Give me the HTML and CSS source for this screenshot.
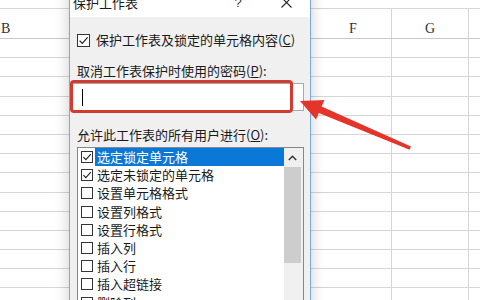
FILE: index.html
```html
<!DOCTYPE html>
<html lang="zh-CN">
<head>
<meta charset="utf-8">
<title>保护工作表</title>
<link rel="stylesheet" href="styles.css">
</head>
<body>
<div class="sheet">
  <div class="topline"></div>
  <div class="grid head"><div class="c c1"><span class="hb">B</span></div><div class="c c2">F</div><div class="c c3">G</div><div class="c c4"></div></div>
  <div class="grid row"><div class="c c1"></div><div class="c c2"></div><div class="c c3"></div><div class="c c4"></div></div>
  <div class="grid row"><div class="c c1"></div><div class="c c2"></div><div class="c c3"></div><div class="c c4"></div></div>
  <div class="grid row"><div class="c c1"></div><div class="c c2"></div><div class="c c3"></div><div class="c c4"></div></div>
  <div class="grid row"><div class="c c1"></div><div class="c c2"></div><div class="c c3"></div><div class="c c4"></div></div>
  <div class="grid row"><div class="c c1"></div><div class="c c2"></div><div class="c c3"></div><div class="c c4"></div></div>
  <div class="grid row"><div class="c c1"></div><div class="c c2"></div><div class="c c3"></div><div class="c c4"></div></div>
  <div class="grid row"><div class="c c1"></div><div class="c c2"></div><div class="c c3"></div><div class="c c4"></div></div>
  <div class="grid row"><div class="c c1"></div><div class="c c2"></div><div class="c c3"></div><div class="c c4"></div></div>
  <div class="grid row"><div class="c c1"></div><div class="c c2"></div><div class="c c3"></div><div class="c c4"></div></div>
  <div class="grid row"><div class="c c1"></div><div class="c c2"></div><div class="c c3"></div><div class="c c4"></div></div>
  <div class="grid row"><div class="c c1"></div><div class="c c2"></div><div class="c c3"></div><div class="c c4"></div></div>
  <div class="grid row"><div class="c c1"></div><div class="c c2"></div><div class="c c3"></div><div class="c c4"></div></div>
  <div class="grid row"><div class="c c1"></div><div class="c c2"></div><div class="c c3"></div><div class="c c4"></div></div>
  <div class="grid row"><div class="c c1"></div><div class="c c2"></div><div class="c c3"></div><div class="c c4"></div></div>
</div>

<div class="dialog">
  <div class="titlebar">
    <span class="title">保护工作表</span>
    <span class="tb-btn help">?</span>
    <span class="tb-btn close"><svg width="11" height="11" viewBox="0 0 11 11"><path d="M0.5 0.5 L10.5 10.5 M10.5 0.5 L0.5 10.5" stroke="#222" stroke-width="1.1" fill="none"/></svg></span>
  </div>
  <div class="body">
    <div class="chk-row">
      <span class="cb"><svg width="11" height="11" viewBox="0 0 11 11"><path d="M1.6 5.6 L4.3 8.4 L9.6 2.4" stroke="#222" stroke-width="1.2" fill="none"/></svg></span>
      <span>保护工作表及锁定的单元格内容(<u>C</u>)</span>
    </div>
    <div class="lbl lbl1">取消工作表保护时使用的密码(<u>P</u>):</div>
    <div class="pwd"><span class="caret"></span></div>
    <div class="lbl lbl2">允许此工作表的所有用户进行(<u>O</u>):</div>
    <div class="list">
      <div class="items">
        <div class="item sel"><span class="cb small"><svg width="10" height="10" viewBox="0 0 10 10"><path d="M1.4 5.1 L3.9 7.7 L8.8 2.2" stroke="#222" stroke-width="1.1" fill="none"/></svg></span><span class="txt">选定锁定单元格</span></div>
        <div class="item"><span class="cb small"><svg width="10" height="10" viewBox="0 0 10 10"><path d="M1.4 5.1 L3.9 7.7 L8.8 2.2" stroke="#222" stroke-width="1.1" fill="none"/></svg></span><span class="txt">选定未锁定的单元格</span></div>
        <div class="item"><span class="cb small"></span><span class="txt">设置单元格格式</span></div>
        <div class="item"><span class="cb small"></span><span class="txt">设置列格式</span></div>
        <div class="item"><span class="cb small"></span><span class="txt">设置行格式</span></div>
        <div class="item"><span class="cb small"></span><span class="txt">插入列</span></div>
        <div class="item"><span class="cb small"></span><span class="txt">插入行</span></div>
        <div class="item"><span class="cb small"></span><span class="txt">插入超链接</span></div>
        <div class="item"><span class="cb small"></span><span class="txt">删除列</span></div>
      </div>
      <div class="scroll">
        <div class="sb-up"><svg width="9" height="6" viewBox="0 0 9 6"><path d="M0.8 5 L4.5 1.2 L8.2 5" stroke="#333" stroke-width="1.4" fill="none"/></svg></div>
        <div class="thumb"></div>
      </div>
    </div>
  </div>
  <div class="redbox"></div>
</div>

<svg class="arrow" width="480" height="300" viewBox="0 0 480 300">
  <polygon points="300,101 324.5,100 321.6,106.6 411,146.6 409.6,149.8 318.8,113 316,119.6" fill="#e5352b"/>
</svg>
</body>
</html>
```

FILE: styles.css
```css
* { box-sizing: border-box; }
html, body { margin: 0; padding: 0; }
body {
  width: 480px;
  height: 300px;
  overflow: hidden;
  position: relative;
  background: #fff;
  font-family: "Noto Sans CJK SC", "Noto Sans", sans-serif;
}

/* spreadsheet */
.sheet { display: flex; flex-direction: column; }
.topline { height: 9px; border-bottom: 1px solid #d6d6d6; }
.grid {
  display: grid;
  grid-template-columns: 315px 77px 77px 11px;
}
.head { height: 30px; border-bottom: 1px solid #c8c8c8; }
.row { height: 19.2px; border-bottom: 1px solid #d6d6d6; }
.c2, .c3 { border-right: 1px solid #d6d6d6; }
.head .c {
  font-family: "Liberation Serif", serif;
  font-size: 14px;
  line-height: 16px;
  color: #333;
  display: flex;
  align-items: flex-end;
  justify-content: center;
  padding-bottom: 1px;
}
.head .c1 { justify-content: flex-start; padding-left: 1px; }

/* dialog */
.dialog {
  position: absolute;
  left: 69px;
  top: -13px;
  width: 242px;
  height: 330px;
  background: #f0f0f0;
  border: 1px solid #7ea6d8;
  box-shadow: 0 0 12px 2px rgba(0,0,0,0.16);
  color: #1a1a1a;
}
.titlebar {
  height: 29px;
  background: #fff;
  display: flex;
  align-items: center;
}
.title {
  font-size: 13px;
  line-height: 18px;
  padding-left: 3px;
  flex: 1;
}
.tb-btn {
  width: 48px;
  height: 29px;
  display: flex;
  align-items: center;
  justify-content: center;
}
.help {
  font-family: "Liberation Sans", sans-serif;
  font-size: 13px;
  color: #333;
}
.body {
  padding: 14px 6px 0 7px;
  font-size: 13px;
  line-height: 18px;
}
.chk-row {
  display: flex;
  align-items: center;
  height: 18px;
}
.cb {
  width: 13px;
  height: 13px;
  border: 1px solid #333;
  background: #fff;
  display: flex;
  align-items: center;
  justify-content: center;
  flex: none;
  margin-right: 6px;
}
.cb.small { width: 12px; height: 12px; margin-right: 2px; }
u { text-decoration-thickness: 1px; text-underline-offset: 1px; }
.lbl { height: 18px; white-space: nowrap; }
.lbl1 { margin-top: 13px; }
.pwd {
  margin: 3px 0 0 -5px;
  height: 28px;
  background: #fff;
  border: 1px solid #a9a9a9;
  display: flex;
  align-items: center;
}
.caret {
  width: 1px;
  height: 17px;
  background: #000;
  margin-left: 9px;
}
.lbl2 { margin-top: 15px; }
.list {
  margin-top: 3px;
  height: 200px;
  background: #fff;
  border: 1px solid #828790;
  display: flex;
}
.items { flex: 1; }
.item {
  height: 18.2px;
  display: flex;
  align-items: center;
  padding-left: 3px;
  white-space: nowrap;
}
.txt {
  flex: 1;
  height: 18px;
  padding-left: 2px;
}
.item.sel .txt { background: #0a78d7; color: #fff; }
.scroll {
  width: 19px;
  background: #f0f0f0;
  display: flex;
  flex-direction: column;
}
.sb-up {
  height: 19px;
  display: flex;
  align-items: center;
  justify-content: center;
  padding-right: 2px;
}
.thumb {
  width: 17px;
  height: 96px;
  background: #cdcdcd;
}
.redbox {
  position: absolute;
  left: 0;
  top: 92px;
  width: 223px;
  height: 33px;
  border: 3px solid #d23b30;
  border-radius: 4px;
}
.arrow {
  position: absolute;
  left: 0;
  top: 0;
  pointer-events: none;
}
```
